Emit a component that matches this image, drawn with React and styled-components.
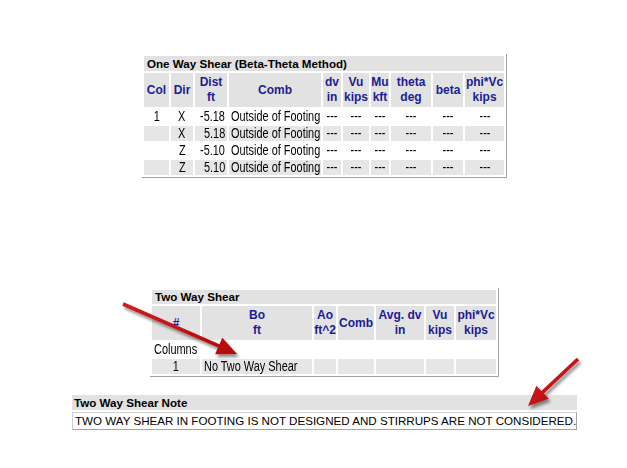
import styled, { createGlobalStyle } from 'styled-components';

const GlobalStyle = createGlobalStyle`
    html, body {
        margin: 0;
        padding: 0;
        background: #ffffff;
    }
    body {
        font-family: "Liberation Sans", Arial, sans-serif;
    }
`

const oneWayCols = [25, 22, 32, 92, 18, 26, 18, 40, 30, 39];
const oneWayHead = [
    ['Col'], ['Dir'], ['Dist', 'ft'], ['Comb'], ['dv', 'in'], ['Vu', 'kips'],
    ['Mu', 'kft'], ['theta', 'deg'], ['beta'], ['phi*Vc', 'kips'],
];
const oneWayRows = [
    ['1', 'X', '-5.18'],
    ['', 'X', '5.18'],
    ['', 'Z', '-5.10'],
    ['', 'Z', '5.10'],
];

const twoWayCols = [48, 110, 22, 36, 48, 28, 40];
const twoWayHead = [
    ['#'], ['Bo', 'ft'], ['Ao', 'ft^2'], ['Comb'], ['Avg. dv', 'in'], ['Vu', 'kips'], ['phi*Vc', 'kips'],
];

// the report prints its data cells in a narrow face, emulate it by squeezing
function Cell ({align = 'left', children, ...rest}) {
    return (
        <Td {...rest}>
            <Fit align={align}>
                <Narrow align={align}>{children}</Narrow>
            </Fit>
        </Td>
    )
}

function HeadCell ({lines}) {
    return (
        <Th>
            {lines.map((l, i) => <div key={i}>{l}</div>)}
        </Th>
    )
}

function Arrow ({x1, y1, x2, y2}) {
    const dx = x2 - x1;
    const dy = y2 - y1;
    const len = Math.sqrt(dx * dx + dy * dy);
    const ux = dx / len;
    const uy = dy / len;
    const headLen = 20;
    const headW = 9;
    const bx = x2 - ux * headLen;
    const by = y2 - uy * headLen;
    const px = -uy;
    const py = ux;
    const shaft = 1.8;
    const pts = [
        [x1 + px * shaft, y1 + py * shaft],
        [bx + px * shaft, by + py * shaft],
        [bx + px * headW, by + py * headW],
        [x2, y2],
        [bx - px * headW, by - py * headW],
        [bx - px * shaft, by - py * shaft],
        [x1 - px * shaft, y1 - py * shaft],
    ].map(p => p.join(',')).join(' ');

    return <polygon points={pts} fill="url(#arrowRed)" filter="url(#arrowShadow)" />
}

function App () {
    return (
        <Page>
            <GlobalStyle />

            <OneWay>
                <Table cols={oneWayCols}>
                    <colgroup>
                        {oneWayCols.map((w, i) => <col key={i} style={{width: w}} />)}
                    </colgroup>
                    <tbody>
                        <tr>
                            <Title colSpan={10}>One Way Shear (Beta-Theta Method)</Title>
                        </tr>
                        <HeadRow>
                            {oneWayHead.map((h, i) => <HeadCell key={i} lines={h} />)}
                        </HeadRow>
                        {oneWayRows.map((r, i) => (
                            <DataRow key={i} shaded={i % 2 === 1}>
                                <Cell align="center">{r[0]}</Cell>
                                <Cell align="center">{r[1]}</Cell>
                                <Cell align="right">{r[2]}</Cell>
                                <Cell>Outside of Footing</Cell>
                                {[0, 1, 2, 3, 4, 5].map(k => <Cell key={k} align="center">---</Cell>)}
                            </DataRow>
                        ))}
                    </tbody>
                </Table>
            </OneWay>

            <TwoWay>
                <Table cols={twoWayCols}>
                    <colgroup>
                        {twoWayCols.map((w, i) => <col key={i} style={{width: w}} />)}
                    </colgroup>
                    <tbody>
                        <tr>
                            <Title colSpan={7} short>Two Way Shear</Title>
                        </tr>
                        <HeadRow>
                            {twoWayHead.map((h, i) => <HeadCell key={i} lines={h} />)}
                        </HeadRow>
                        <DataRow>
                            <Cell>Columns</Cell>
                            <Cell colSpan={6}></Cell>
                        </DataRow>
                        <DataRow shaded>
                            <Cell align="center">1</Cell>
                            <Cell>No Two Way Shear</Cell>
                            {[0, 1, 2, 3, 4].map(k => <Cell key={k}></Cell>)}
                        </DataRow>
                    </tbody>
                </Table>
            </TwoWay>

            <Note>
                <NoteTitle>Two Way Shear Note</NoteTitle>
                <NoteText>TWO WAY SHEAR IN FOOTING IS NOT DESIGNED AND STIRRUPS ARE NOT CONSIDERED.</NoteText>
            </Note>

            <Overlay width="627" height="468" viewBox="0 0 627 468">
                <defs>
                    <linearGradient id="arrowRed" x1="0" y1="0" x2="1" y2="1">
                        <stop offset="0" stopColor="#d41c1c" />
                        <stop offset="1" stopColor="#b20909" />
                    </linearGradient>
                    <filter id="arrowShadow" x="-20%" y="-20%" width="140%" height="140%">
                        <feDropShadow dx="2" dy="3" stdDeviation="1.6" floodColor="#000000" floodOpacity="0.45" />
                    </filter>
                </defs>
                <Arrow x1={123} y1={304} x2={237} y2={354} />
                <Arrow x1={578} y1={359} x2={528} y2={406} />
            </Overlay>
        </Page>
    )
}

export default App;

const Page = styled.div`
    position: relative;
    width: 627px;
    height: 468px;
    overflow: hidden;
    display: flex;
    flex-direction: column;
    align-items: flex-start;
`

const Overlay = styled.svg`
    position: absolute;
    left: 0;
    top: 0;
    pointer-events: none;
`

const OneWay = styled.div`
    margin: 54px 0 0 142px;
`

const TwoWay = styled.div`
    margin: 110px 0 0 150px;
`

const Table = styled.table`
    table-layout: fixed;
    width: ${props => props.cols.reduce((a, b) => a + b, 0) + (props.cols.length + 1) * 2}px;
    border-collapse: separate;
    border-spacing: 2px;
    border-right: 1px solid #a4a4a4;
    border-bottom: 1px solid #a4a4a4;
    color: #000000;
`

const Title = styled.td`
    height: ${props => props.short ? 14 : 15}px;
    padding: 0 3px;
    background: #e2e2e2;
    font-weight: bold;
    font-size: 11.6px;
    line-height: ${props => props.short ? 14 : 15}px;
    white-space: nowrap;
`

const HeadRow = styled.tr`
    height: 34px;
`

const Th = styled.td`
    padding: 0;
    background: #e2e2e2;
    color: #1c1c94;
    font-weight: bold;
    font-size: 12px;
    text-align: center;
    line-height: 15px;
    white-space: nowrap;
`

const DataRow = styled.tr`
    height: 15px;
    background: ${props => props.shaded ? '#e6e6e6' : '#ffffff'};
`

const Td = styled.td`
    padding: 0;
    overflow: hidden;
`

const Fit = styled.div`
    display: flex;
    justify-content: ${props => props.align === 'center' ? 'center' : props.align === 'right' ? 'flex-end' : 'flex-start'};
    padding: 0 2px;
    height: 15px;
`

const Narrow = styled.span`
    flex-shrink: 0;
    font-size: 14px;
    line-height: 15px;
    white-space: nowrap;
    transform: scaleX(0.78);
    transform-origin: ${props => props.align};
`

const Note = styled.div`
    margin: 18px 0 0 72px;
    width: 505px;
    display: flex;
    flex-direction: column;
    gap: 2px;
`

const NoteTitle = styled.div`
    height: 15px;
    padding: 0 2px;
    background: #e2e2e2;
    font-weight: bold;
    font-size: 11.6px;
    line-height: 15px;
`

const NoteText = styled.div`
    height: 16px;
    padding: 0 2px;
    border: 1px solid #a4a4a4;
    border-left-color: #cfcfcf;
    border-top-color: #cfcfcf;
    font-size: 11.6px;
    line-height: 16px;
    white-space: nowrap;
`
